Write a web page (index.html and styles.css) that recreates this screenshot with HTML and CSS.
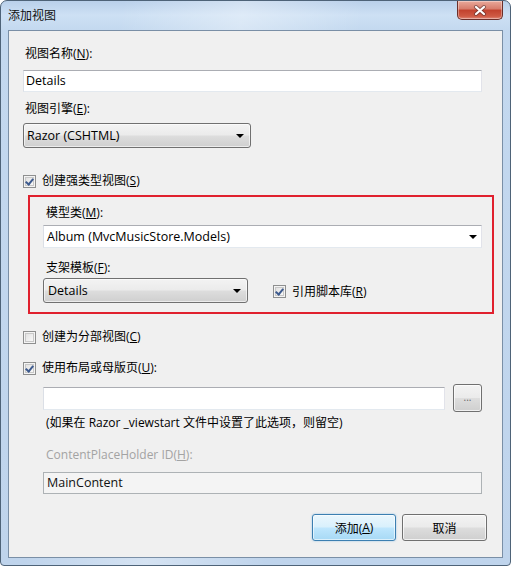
FILE: index.html
```html
<!DOCTYPE html>
<html lang="zh-CN">
<head>
<meta charset="utf-8">
<title>添加视图</title>
<link rel="stylesheet" href="styles.css">
</head>
<body>
<div class="window">
  <div class="titlebar">
    <div class="title">添加视图</div>
    <div class="close">
      <svg width="14" height="11" viewBox="0 0 14 11">
        <path d="M3 2 L11 9 M11 2 L3 9" stroke="#4a2a2a" stroke-width="4" stroke-linecap="round" fill="none" opacity="0.55"/>
        <path d="M3 2 L11 9 M11 2 L3 9" stroke="#ffffff" stroke-width="2.2" stroke-linecap="round" fill="none"/>
      </svg>
    </div>
  </div>
  <div class="client">
    <div class="lbl lbl-first">视图名称(<u>N</u>):</div>
    <div class="textbox tb-name">Details</div>
    <div class="lbl lbl-engine">视图引擎(<u>E</u>):</div>
    <div class="combo combo-engine"><span class="ctext">Razor (CSHTML)</span><span class="arrow"></span></div>

    <div class="check-row cr-strong">
      <span class="cb checked"></span><span class="ctxt">创建强类型视图(<u>S</u>)</span>
    </div>

    <div class="redbox">
      <div class="lbl">模型类(<u>M</u>):</div>
      <div class="editcombo"><span class="ctext">Album (MvcMusicStore.Models)</span><span class="arrow"></span></div>
      <div class="lbl lbl-scaffold">支架模板(<u>F</u>):</div>
      <div class="scaffold-row">
        <div class="combo combo-scaffold"><span class="ctext">Details</span><span class="arrow"></span></div>
        <div class="check-inline"><span class="cb checked"></span><span class="ctxt">引用脚本库(<u>R</u>)</span></div>
      </div>
    </div>

    <div class="check-row cr-partial">
      <span class="cb"></span><span class="ctxt">创建为分部视图(<u>C</u>)</span>
    </div>
    <div class="check-row cr-layout">
      <span class="cb checked"></span><span class="ctxt">使用布局或母版页(<u>U</u>):</span>
    </div>

    <div class="layout-row">
      <div class="textbox tb-layout"></div>
      <div class="btn btn-browse">...</div>
    </div>
    <div class="hint">(如果在 Razor _viewstart 文件中设置了此选项，则留空)</div>
    <div class="lbl lbl-cph">ContentPlaceHolder ID(<u>H</u>):</div>
    <div class="textbox tb-cph">MainContent</div>

    <div class="button-row">
      <div class="btn btn-default">添加(<u>A</u>)</div>
      <div class="btn btn-cancel">取消</div>
    </div>
  </div>
</div>
</body>
</html>
```

FILE: styles.css
```css
html, body {
  margin: 0;
  padding: 0;
  background: #ffffff;
}

body {
  width: 511px;
  height: 566px;
  overflow: hidden;
  font-family: "Open Sans", "Noto Sans CJK SC", sans-serif;
  font-size: 12px;
  color: #000;
}

.window {
  width: 511px;
  height: 566px;
  box-sizing: border-box;
  border: 1px solid #4e6378;
  border-radius: 7px 7px 4px 4px;
  background:
    linear-gradient(100deg, rgba(255,255,255,0) 20%, rgba(255,255,255,0.35) 40%, rgba(255,255,255,0) 60%),
    linear-gradient(to bottom, #b9d0ea 0px, #cde0f4 14px, #c3d8ef 30px, #bfd4ec 100%);
  display: flex;
  flex-direction: column;
}

.titlebar {
  height: 29px;
  display: flex;
  align-items: flex-start;
  flex: none;
}

.title {
  padding: 7px 0 0 7px;
  line-height: 16px;
  font-size: 12px;
  color: #111;
}

.close {
  margin-left: auto;
  margin-right: 7px;
  width: 46px;
  height: 19px;
  box-sizing: border-box;
  border: 1px solid #6b2f2a;
  border-top: none;
  border-radius: 0 0 5px 5px;
  background: linear-gradient(to bottom, #e9a99b 0%, #d67b6a 45%, #c2412d 50%, #cf5a44 85%, #e0897a 100%);
  box-shadow: inset 0 0 0 1px rgba(255,255,255,0.35);
  display: flex;
  align-items: center;
  justify-content: center;
}

.close svg { display: block; }

.client {
  flex: 1;
  margin: 0 7px 7px 7px;
  border: 1px solid #7a8fa6;
  background: #f0f0f0;
  padding: 0 19px 0 14px;
  display: flex;
  flex-direction: column;
  align-items: flex-start;
}

.lbl {
  line-height: 16px;
  height: 16px;
  padding-left: 2px;
  white-space: nowrap;
}

.lbl-first { margin-top: 15px; }
.lbl-engine { margin-top: 9px; }

.textbox {
  box-sizing: border-box;
  height: 22px;
  background: #fff;
  border: 1px solid;
  border-color: #abadb3 #e2e3ea #e3e9ef #dbdfe6;
  padding-left: 2px;
  line-height: 20px;
  font-size: 12.5px;
  white-space: nowrap;
}

.tb-name {
  margin-top: 8px;
  width: 459px;
}

.combo {
  box-sizing: border-box;
  height: 25px;
  border: 1px solid #707070;
  border-radius: 3px;
  background: linear-gradient(to bottom, #f3f3f3 0%, #ebebeb 48%, #dddddd 52%, #cfcfcf 100%);
  box-shadow: inset 0 0 0 1px rgba(255,255,255,0.6);
  display: flex;
  align-items: center;
  padding: 0 6px 0 3px;
  font-size: 12.5px;
}

.ctext {
  flex: 1;
  white-space: nowrap;
}

.arrow {
  width: 0;
  height: 0;
  border-left: 4px solid transparent;
  border-right: 4px solid transparent;
  border-top: 4px solid #000;
  margin-top: 1px;
}

.combo-engine {
  margin-top: 6px;
  width: 228px;
}

.check-row {
  display: flex;
  align-items: center;
  height: 16px;
  line-height: 16px;
  white-space: nowrap;
}

.cr-strong { margin-top: 25px; }
.cr-partial { margin-top: 15px; }
.cr-layout { margin-top: 15px; }

.cb {
  width: 13px;
  height: 13px;
  box-sizing: border-box;
  border: 1px solid #8e8f8f;
  background:
    linear-gradient(135deg, #dcdcdc 0%, #f4f4f4 70%, #ffffff 100%);
  box-shadow: inset 0 0 0 1px #f4f4f4, inset 0 0 0 2px #c8c8c8;
  flex: none;
  position: relative;
}

.cb.checked::after {
  content: "";
  position: absolute;
  left: 3px;
  top: 1px;
  width: 3px;
  height: 6px;
  border: solid #3d5a8e;
  border-width: 0 2px 2px 0;
  transform: rotate(40deg);
}

.ctxt {
  margin-left: 6px;
}

.redbox {
  margin-top: 6px;
  margin-left: 5px;
  width: 466px;
  box-sizing: border-box;
  border: 2px solid #e0202e;
  padding: 8px 10px 9px 13px;
  display: flex;
  flex-direction: column;
  align-items: flex-start;
}

.redbox .lbl { padding-left: 3px; }

.editcombo {
  margin-top: 4px;
  box-sizing: border-box;
  width: 439px;
  height: 23px;
  background: #fff;
  border: 1px solid;
  border-color: #abadb3 #e2e3ea #e3e9ef #dbdfe6;
  display: flex;
  align-items: center;
  padding: 0 4px 0 3px;
  font-size: 12.5px;
}

.lbl-scaffold { margin-top: 12px; }

.scaffold-row {
  margin-top: 2px;
  display: flex;
  align-items: center;
}

.combo-scaffold {
  width: 205px;
  padding-left: 4px;
}

.check-inline {
  display: flex;
  align-items: center;
  margin-left: 25px;
  white-space: nowrap;
  line-height: 16px;
  margin-top: 2px;
}

.layout-row {
  margin-top: 8px;
  margin-left: 20px;
  display: flex;
  align-items: center;
  height: 28px;
}

.tb-layout {
  width: 402px;
  height: 23px;
}

.btn {
  box-sizing: border-box;
  border: 1px solid #707070;
  border-radius: 3px;
  background: linear-gradient(to bottom, #f3f3f3 0%, #ebebeb 48%, #dddddd 52%, #cfcfcf 100%);
  box-shadow: inset 0 0 0 1px rgba(255,255,255,0.7);
  display: flex;
  align-items: center;
  justify-content: center;
  white-space: nowrap;
}

.btn-browse {
  margin-left: 8px;
  width: 29px;
  height: 28px;
  color: #666;
  font-size: 10px;
  line-height: 10px;
  padding-bottom: 2px;
}

.hint {
  margin-top: 3px;
  padding-left: 23px;
  line-height: 16px;
  white-space: nowrap;
}

.lbl-cph {
  margin-top: 16px;
  margin-left: 20px;
  padding-left: 3px;
  color: #a3a3a3;
}

.tb-cph {
  margin-top: 9px;
  margin-left: 20px;
  width: 439px;
  height: 22px;
  background: #f4f4f4;
  border-color: #adb2b5;
  padding-left: 3px;
  color: #111;
}

.button-row {
  margin-top: 20px;
  align-self: stretch;
  display: flex;
  justify-content: flex-end;
  margin-right: -4px;
}

.btn-default,
.btn-cancel {
  height: 27px;
  width: 85px;
}

.btn-default {
  width: 84px;
  border-color: #3c7fb1;
  background: linear-gradient(to bottom, #eaf6fd 0%, #d9f0fc 48%, #bee6fd 52%, #a7d9f5 100%);
  box-shadow: inset 0 0 0 1px rgba(255,255,255,0.6), 0 0 2px rgba(80,160,220,0.6);
}

.btn-cancel {
  margin-left: 6px;
}
```
